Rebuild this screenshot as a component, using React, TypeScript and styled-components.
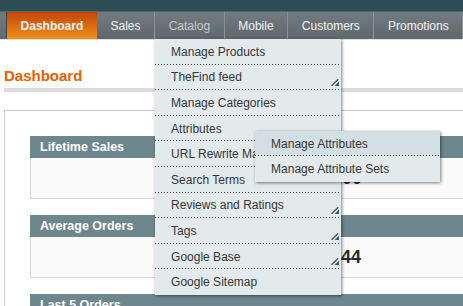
import styled, { createGlobalStyle } from "styled-components";

const GlobalStyle = createGlobalStyle`
  body {
    margin: 0;
    background: #fff;
    font-family: "Liberation Sans", Arial, sans-serif;
    overflow: hidden;
  }
`;

const TopStrip = styled.div`
  height: 11px;
  background: #2d4d55;
  border-bottom: 1px solid #4f6a71;
`;

const NavBar = styled.ul`
  display: flex;
  margin: 0;
  padding: 0 0 0 6px;
  list-style: none;
  height: 27px;
  background: linear-gradient(#727b80, #5f686d);
  border-bottom: 1px solid #e2e2e2;
`;

const NavItem = styled.li<{ $active?: boolean; $dim?: boolean }>`
  position: relative;
  display: flex;
  align-items: center;
  padding: 0 13.6px;
  font-size: 12px;
  font-weight: ${(p) => (p.$active ? "bold" : "normal")};
  color: ${(p) => (p.$dim ? "#c3c9cb" : "#f4f4f4")};
  white-space: nowrap;
  background: ${(p) =>
    p.$active ? "linear-gradient(#c24503, #f0911e)" : "transparent"};
  border-left: ${(p) => (p.$active ? "1px solid #3c464a" : "none")};
  border-right: ${(p) => (p.$active ? "none" : "1px solid #8a9296")};
`;

const Dropdown = styled.ul`
  position: absolute;
  z-index: 10;
  top: 27px;
  left: 0;
  width: 186px;
  margin: 0;
  padding: 0;
  list-style: none;
  background: #e2eaec;
  box-shadow: 1px 1px 3px rgba(0, 0, 0, 0.5);
`;

const MenuItem = styled.li<{ $hover?: boolean; $last?: boolean }>`
  position: relative;
  box-sizing: border-box;
  height: 25.6px;
  display: flex;
  align-items: center;
  padding-left: 16px;
  font-size: 12px;
  font-weight: normal;
  color: #363636;
  background: ${(p) => (p.$hover ? "#d3dfe2" : "transparent")};
  &::after {
    content: "";
    display: ${(p) => (p.$last ? "none" : "block")};
    position: absolute;
    left: 0;
    right: 0;
    bottom: 0;
    height: 1px;
    background: repeating-linear-gradient(
      to right,
      #4a4a4a 0 1px,
      transparent 1px 3px
    );
  }
`;

const Flyout = styled(Dropdown)`
  top: 15px;
  left: 100px;
  width: 185px;
`;

const MoreIcon = styled.svg`
  position: absolute;
  right: 2px;
  bottom: 4px;
`;

const Page = styled.div`
  padding-left: 4px;
`;

const Heading = styled.h1`
  margin: 27px 0 0;
  padding-bottom: 3px;
  font-size: 15px;
  line-height: 18px;
  font-weight: bold;
  color: #eb5e00;
  border-bottom: 4px solid #dcdcdc;
`;

const Box = styled.div`
  margin-top: 18px;
  padding: 25px 0 0 25px;
  border: 1px solid #cbcbcb;
  border-right: none;
`;

const Section = styled.div`
  margin-bottom: 16px;
`;

const SectionHead = styled.div`
  height: 22px;
  display: flex;
  align-items: center;
  padding-left: 10px;
  background: #6e868d;
  color: #fff;
  font-size: 12.5px;
  font-weight: bold;
`;

const SectionBody = styled.div`
  height: 40px;
  display: flex;
  align-items: center;
  padding-left: 251px;
  background: #fafafa;
  border-left: 1px solid #d6d6d6;
  border-bottom: 1px solid #d6d6d6;
  font-size: 18px;
  font-weight: bold;
  color: #2b2b2b;
`;

function Grip() {
  return (
    <MoreIcon width="8" height="7" viewBox="0 0 8 7">
      <path d="M0.5 6.8 L7.2 0.3" stroke="#3a5966" strokeWidth="1.4" />
      <path d="M3.6 7 L8 2.6 L8 7 Z" fill="#3a5966" />
    </MoreIcon>
  );
}

const catalog = [
  { label: "Manage Products" },
  { label: "TheFind feed", more: true },
  { label: "Manage Categories" },
  { label: "Attributes", sub: true },
  { label: "URL Rewrite Management" },
  { label: "Search Terms" },
  { label: "Reviews and Ratings", more: true },
  { label: "Tags", more: true },
  { label: "Google Base", more: true },
  { label: "Google Sitemap" },
];

const sections = [
  { title: "Lifetime Sales", value: "$9,876.00" },
  { title: "Average Orders", value: "$1,112.44" },
  { title: "Last 5 Orders", value: "" },
];

export default function App() {
  return (
    <>
      <GlobalStyle />
      <TopStrip />
      <NavBar>
        <NavItem $active>Dashboard</NavItem>
        <NavItem>Sales</NavItem>
        <NavItem $dim>
          Catalog
          <Dropdown>
            {catalog.map((item, i) => (
              <MenuItem key={item.label} $last={i === catalog.length - 1}>
                {item.label}
                {item.more && <Grip />}
                {item.sub && (
                  <Flyout>
                    <MenuItem $hover>Manage Attributes</MenuItem>
                    <MenuItem $last>Manage Attribute Sets</MenuItem>
                  </Flyout>
                )}
              </MenuItem>
            ))}
          </Dropdown>
        </NavItem>
        <NavItem>Mobile</NavItem>
        <NavItem>Customers</NavItem>
        <NavItem>Promotions</NavItem>
      </NavBar>
      <Page>
        <Heading>Dashboard</Heading>
        <Box>
          {sections.map((s) => (
            <Section key={s.title}>
              <SectionHead>{s.title}</SectionHead>
              <SectionBody>{s.value}</SectionBody>
            </Section>
          ))}
        </Box>
      </Page>
    </>
  );
}
